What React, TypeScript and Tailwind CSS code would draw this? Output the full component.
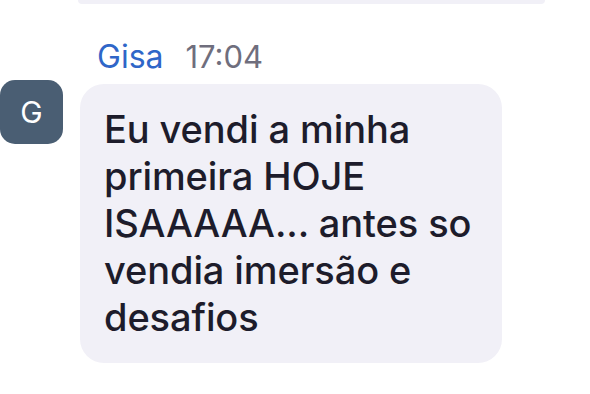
export default function App() {
  return (
    <div className="w-[590px] h-[394px] bg-white overflow-hidden font-['Inter',sans-serif]">
      <div className="ml-[78px] w-[467px] h-[4px] bg-[#f1f0f7] rounded-b-[24px]" />
      <div className="flex flex-col pt-[29px]">
        <div className="flex items-baseline gap-[22px] pl-[97px] h-[51px]">
          <span className="text-[32px] text-[#2f66c8]">Gisa</span>
          <span className="text-[31px] text-[#6f6e7d]">17:04</span>
        </div>
        <div className="flex items-start gap-[17px]">
          <div className="w-[63px] h-[64px] mt-[-4px] rounded-[15px] bg-[#4a5e73] flex items-center justify-center text-white text-[30px]">
            G
          </div>
          <div className="w-[422px] h-[279px] rounded-[24px] bg-[#f1f0f7] pl-[24px] pr-[14px] pt-[22px]">
            <p className="text-[38px] leading-[47px] font-medium text-[#1d1c2b] tracking-[-0.1px]">
              Eu vendi a minha primeira HOJE ISAAAAA... antes so vendia imersão e desafios
            </p>
          </div>
        </div>
      </div>
    </div>
  );
}
